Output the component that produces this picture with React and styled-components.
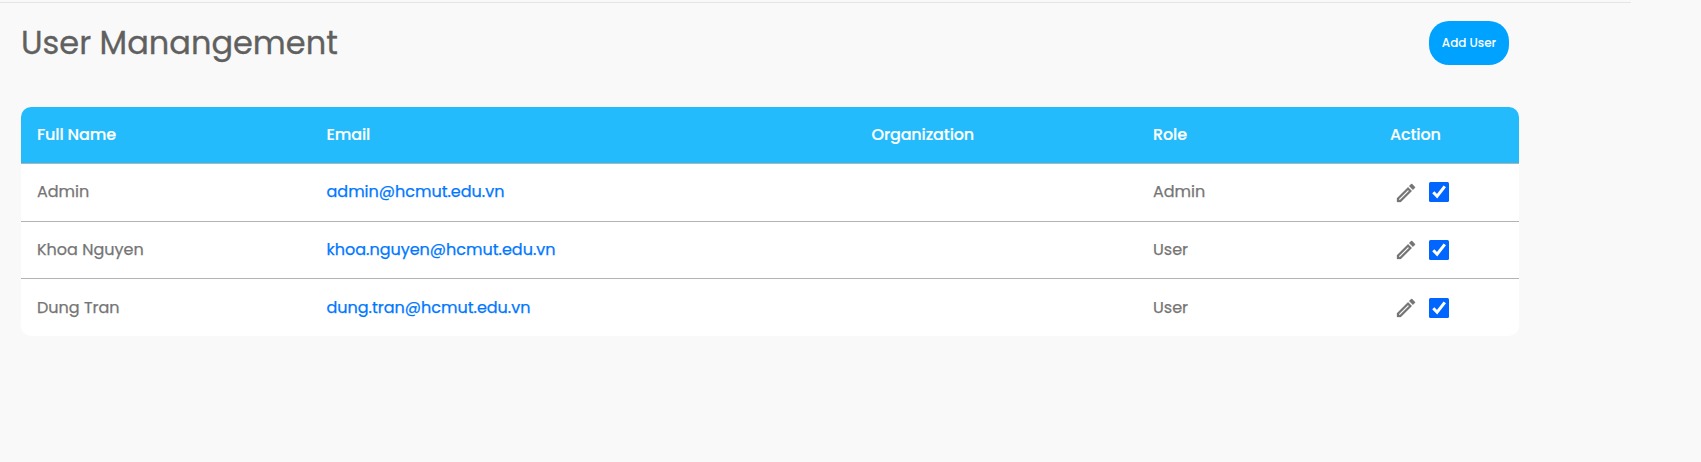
import React from "react";
import styled, { createGlobalStyle } from "styled-components";
import { MdOutlineEdit } from "react-icons/md";

const GlobalStyle = createGlobalStyle`
  *, *::before, *::after { box-sizing: border-box; }
  body {
    margin: 0;
    background: #f9f9f9;
    font-family: Poppins, Inter, "Open Sans", sans-serif;
  }
`;

const Page = styled.main`
  min-height: 462px;
  padding-top: 2px;
  background: #f9f9f9;
`;

const TopRule = styled.hr`
  width: 1631px;
  height: 1px;
  margin: 0;
  border: 0;
  background: #e5e5e5;
`;

const Content = styled.section`
  width: 1498px;
  margin-left: 21px;
`;

const Heading = styled.header`
  display: flex;
  justify-content: space-between;
  align-items: flex-start;
  height: 104px;
  padding: 18px 10px 0 0;
`;

const Title = styled.h1`
  margin: 0;
  color: #606060;
  font-size: 32px;
  font-weight: 400;
  line-height: 44px;
  -webkit-text-stroke: 0.3px #606060;
`;

const AddButton = styled.button`
  width: 80px;
  height: 44px;
  padding: 0;
  border: 0;
  border-radius: 20px;
  background: #00a2ff;
  color: #fff;
  font: 500 12px/44px Poppins, Inter, sans-serif;
`;

const Table = styled.div`
  overflow: hidden;
  border-radius: 10px;
  background: #fff;
`;

const Row = styled.div`
  display: grid;
  grid-template-columns: 289.5px 545px 281.5px 237px 1fr;
  align-items: start;
  height: ${({ $height = 58 }) => $height}px;
  padding: ${({ $inset = 16 }) => $inset}px 0 0 16px;
  border-top: 1px solid #b3b3b3;
  color: #757575;
  font-size: 16px;
  line-height: 24px;
  -webkit-text-stroke: 0.25px;
`;

const HeadRow = styled(Row)`
  border-top: 0;
  background: #23bbfc;
  color: #fff;
  font-weight: 500;
  letter-spacing: -0.13px;
  -webkit-text-stroke: 0.15px;
`;

const Cell = styled.span``;

const Email = styled(Cell)`
  color: #0077ff;
`;

const Actions = styled.div`
  display: flex;
  align-items: flex-start;
  gap: 11px;
  padding-left: 4px;
`;

const EditIcon = styled(MdOutlineEdit)`
  width: 24px;
  height: 24px;
  margin-top: ${({ $drop }) => $drop}px;
  color: #757575;
  stroke-width: 0.3px;

  path[fill="none"] {
    stroke: none;
  }
`;

const CheckBox = styled.svg`
  width: 20px;
  height: 20px;
  margin-top: 2px;
`;

const columns = ["Full Name", "Email", "Organization", "Role", "Action"];

const users = [
  { name: "Admin", email: "admin@hcmut.edu.vn", role: "Admin", height: 58, inset: 16, drop: 1 },
  { name: "Khoa Nguyen", email: "khoa.nguyen@hcmut.edu.vn", role: "User", height: 57, inset: 16, drop: 0 },
  { name: "Dung Tran", email: "dung.tran@hcmut.edu.vn", role: "User", height: 58, inset: 17, drop: 0 },
];

function Checked() {
  return (
    <CheckBox viewBox="0 0 20 20" role="img" aria-label="Active">
      <rect width="20" height="20" rx="1.5" fill="#0066ff" />
      <path d="M4.3 10.2 8.1 14.2 15.8 4.4" fill="none" stroke="#fff" strokeWidth="3" />
    </CheckBox>
  );
}

export default function App() {
  return (
    <>
      <GlobalStyle />
      <Page>
        <TopRule />
        <Content>
          <Heading>
            <Title>User Manangement</Title>
            <AddButton>Add User</AddButton>
          </Heading>
          <Table>
            <HeadRow $height={56} $inset={16}>
              {columns.map((label) => (
                <Cell key={label}>{label}</Cell>
              ))}
            </HeadRow>
            {users.map((user) => (
              <Row key={user.name} $height={user.height} $inset={user.inset}>
                <Cell>{user.name}</Cell>
                <Email>{user.email}</Email>
                <Cell />
                <Cell>{user.role}</Cell>
                <Actions>
                  <EditIcon $drop={user.drop} />
                  <Checked />
                </Actions>
              </Row>
            ))}
          </Table>
        </Content>
      </Page>
    </>
  );
}
